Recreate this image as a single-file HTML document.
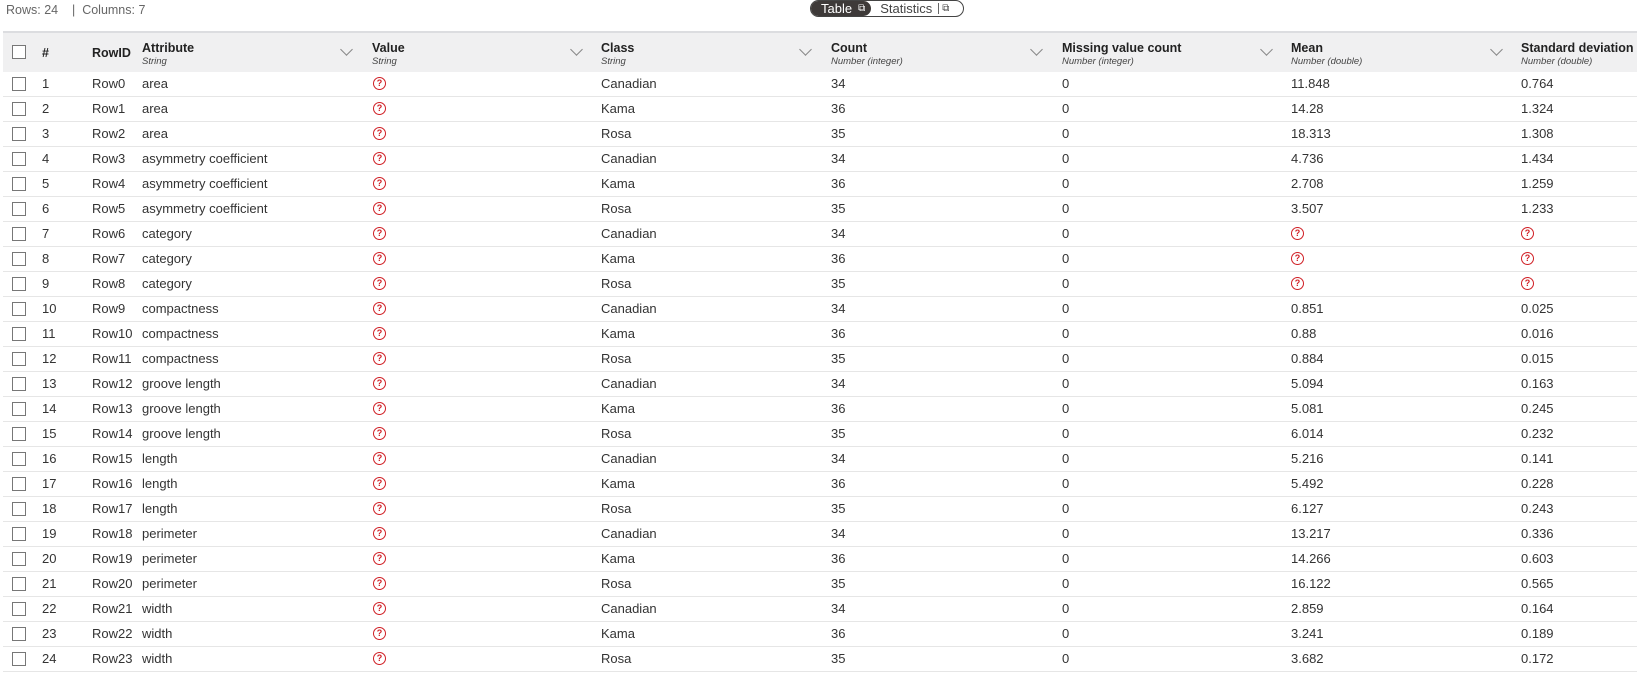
<!DOCTYPE html>
<html><head><meta charset="utf-8"><style>
*{box-sizing:border-box;margin:0;padding:0}
body{width:1637px;height:687px;overflow:hidden;background:#fff;font-family:"Liberation Sans",Arial,sans-serif;color:#222;position:relative}
.top{position:absolute;left:6px;top:3px;font-size:12.5px;color:#666}
.tog{position:absolute;left:810px;top:0;height:17px;width:154px;border:1px solid #444;border-radius:9px;font-size:13px;display:flex;align-items:center;overflow:hidden}
.tog .a{background:#3e3a39;color:#fff;height:100%;padding:0 6px 0 10px;display:flex;align-items:center;gap:6px;border-radius:0 9px 9px 0}
.tog .b{padding:0 6px 0 9px;color:#444;display:flex;align-items:center;gap:6px}
.hdr{position:absolute;left:3px;right:0;top:31px;height:41px;background:#f0f0f1;border-top:2px solid #dcdde0}
.row{position:absolute;left:3px;right:0;height:25px;border-bottom:1px solid #e6e6e6;font-size:13px;color:#333}
.c{position:absolute;top:0;white-space:nowrap}
.row .c{line-height:24px}
.cb{position:absolute;left:9px;width:14px;height:14px;border:1px solid #777;background:#fff}
.h{font-weight:bold;font-size:12.5px;top:8px}
.h i{display:block;font-weight:normal;font-size:9.5px;color:#444;margin-top:1px}
.chev{position:absolute;top:12px;width:9px;height:9px;border-right:1px solid #888;border-bottom:1px solid #888;transform:rotate(45deg)}
.q{display:inline-block;width:13px;height:13px;border:1.5px solid #d01f25;border-radius:50%;color:#d01f25;font-size:9px;line-height:10px;text-align:center;font-weight:bold;vertical-align:middle;margin-top:-2px}
</style></head><body>
<div class="top">Rows: 24 &nbsp;&nbsp;&nbsp;| &nbsp;Columns: 7</div>
<div class="tog"><div class="a">Table <span style="font-size:10px">⧉</span></div><div class="b">Statistics <span style="border-left:1px solid #666;padding-left:3px;font-size:10px">⧉</span></div></div>
<div class="hdr">
<div class="cb" style="top:12px"></div>
<div class="c h" style="left:39px;top:13px">#</div>
<div class="c h" style="left:89px;top:13px">RowID</div>
<div class="c h" style="left:139px">Attribute<i>String</i></div><div class="chev" style="left:339px"></div>
<div class="c h" style="left:369px">Value<i>String</i></div><div class="chev" style="left:569px"></div>
<div class="c h" style="left:598px">Class<i>String</i></div><div class="chev" style="left:798px"></div>
<div class="c h" style="left:828px">Count<i>Number (integer)</i></div><div class="chev" style="left:1029px"></div>
<div class="c h" style="left:1059px">Missing value count<i>Number (integer)</i></div><div class="chev" style="left:1259px"></div>
<div class="c h" style="left:1288px">Mean<i>Number (double)</i></div><div class="chev" style="left:1489px"></div>
<div class="c h" style="left:1518px">Standard deviation<i>Number (double)</i></div>
</div>
<div id="rows"></div>
<script>
var d=[["area","Canadian",34,"11.848","0.764"],["area","Kama",36,"14.28","1.324"],["area","Rosa",35,"18.313","1.308"],["asymmetry coefficient","Canadian",34,"4.736","1.434"],["asymmetry coefficient","Kama",36,"2.708","1.259"],["asymmetry coefficient","Rosa",35,"3.507","1.233"],["category","Canadian",34,"",""],["category","Kama",36,"",""],["category","Rosa",35,"",""],["compactness","Canadian",34,"0.851","0.025"],["compactness","Kama",36,"0.88","0.016"],["compactness","Rosa",35,"0.884","0.015"],["groove length","Canadian",34,"5.094","0.163"],["groove length","Kama",36,"5.081","0.245"],["groove length","Rosa",35,"6.014","0.232"],["length","Canadian",34,"5.216","0.141"],["length","Kama",36,"5.492","0.228"],["length","Rosa",35,"6.127","0.243"],["perimeter","Canadian",34,"13.217","0.336"],["perimeter","Kama",36,"14.266","0.603"],["perimeter","Rosa",35,"16.122","0.565"],["width","Canadian",34,"2.859","0.164"],["width","Kama",36,"3.241","0.189"],["width","Rosa",35,"3.682","0.172"]];
var Q='<span class="q">?</span>',h='';
d.forEach(function(r,i){h+='<div class="row" style="top:'+(72+i*25)+'px"><div class="cb" style="top:5px"></div><div class="c" style="left:39px">'+(i+1)+'</div><div class="c" style="left:89px">Row'+i+'</div><div class="c" style="left:139px">'+r[0]+'</div><div class="c" style="left:370px">'+Q+'</div><div class="c" style="left:598px">'+r[1]+'</div><div class="c" style="left:828px">'+r[2]+'</div><div class="c" style="left:1059px">0</div><div class="c" style="left:1288px">'+(r[3]||Q)+'</div><div class="c" style="left:1518px">'+(r[4]||Q)+'</div></div>'});
document.getElementById('rows').innerHTML=h;
</script>
</body></html>
